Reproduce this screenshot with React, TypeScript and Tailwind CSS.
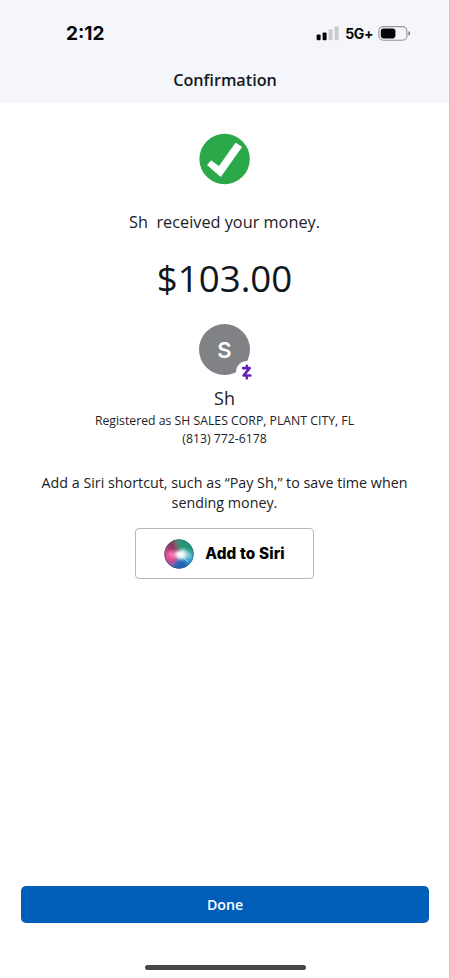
import React from 'react';

const details = [
  "Registered as SH SALES CORP, PLANT CITY, FL",
  "(813) 772-6178",
];

const SignalIcon = () => (
  <svg width="23" height="15" viewBox="0 0 23 15">
    <rect x="0.6" y="8.4" width="4" height="5.8" rx="1.2" fill="#050505" />
    <rect x="6.6" y="6.4" width="4" height="7.8" rx="1.2" fill="#050505" />
    <rect x="12.6" y="3.2" width="4" height="11" rx="1.2" fill="#c9cacc" />
    <rect x="18.6" y="0.2" width="4" height="14" rx="1.2" fill="#c9cacc" />
  </svg>
);

const BatteryIcon = () => (
  <svg width="33" height="16" viewBox="0 0 33 16">
    <rect x="0.9" y="0.6" width="28" height="13.6" rx="4.4" fill="none" stroke="#97989b" strokeWidth="1.1" />
    <rect x="2.8" y="2.4" width="14.6" height="10" rx="2.8" fill="#050505" />
    <path d="M30.3 5.2c1.3.4 1.9 1.2 1.9 2.2s-.6 1.8-1.9 2.2z" fill="#7e7f82" />
  </svg>
);

const CheckIcon = () => (
  <svg width="52" height="52" viewBox="0 0 52 52">
    <circle cx="25.6" cy="26" r="25.2" fill="#2ba84a" />
    <path d="M9 32L12.2 28.2L20.2 34L36.700 10.7L42.1 14.2L21.6 43z" fill="#fff" stroke="#fff" strokeWidth="1.4" strokeLinejoin="round" />
  </svg>
);

const ZelleIcon = () => (
  <svg width="12" height="16" viewBox="0 0 12 16" fill="none" stroke="#6322b8">
    <path d="M2.2 4.2H8.600L2.600 11.5H9.300" strokeWidth="2.7" strokeLinejoin="round" strokeLinecap="round" />
    <path d="M5.8 1.6V4M5.800 12V14.400" strokeWidth="2.4" strokeLinecap="round" />
  </svg>
);

const SiriIcon = () => (
  <svg width="30" height="30" viewBox="0 0 30 30">
    <defs>
      <clipPath id="orb"><circle cx="15" cy="15" r="14.6" /></clipPath>
      <filter id="soft" x="-40%" y="-40%" width="180%" height="180%"><feGaussianBlur stdDeviation="2" /></filter>
      <filter id="glow" x="-40%" y="-40%" width="180%" height="180%"><feGaussianBlur stdDeviation="1.4" /></filter>
    </defs>
    <g clipPath="url(#orb)">
      <rect width="30" height="30" fill="#385b88" />
      <g filter="url(#soft)">
        <path d="M15 15L10 -3H33V13z" fill="#209676" />
        <path d="M15 15L32 12V25L23 29z" fill="#3fa9d0" />
        <path d="M15 15L26 25L18 33H3L7 25z" fill="#2365b8" />
        <path d="M16 15L8 26L-3 22V8L5 5z" fill="#e0488f" />
        <path d="M15 14L2 12L4 1L11 -2z" fill="#8f3a62" />
      </g>
      <g filter="url(#glow)">
        <path d="M4 13Q11 10 16 15Q9 22 5 18z" fill="#ed78b2" />
        <path d="M15 15L18 9L25 13L27 18L18 21L13 20z" fill="#8fd6d6" />
        <ellipse cx="16.5" cy="15.5" rx="4.8" ry="3.8" fill="#fff" />
      </g>
      <path d="M16 15L24 23" stroke="#d6f5ff" strokeWidth="1" opacity=".7" />
    </g>
    <circle cx="15" cy="15" r="14.2" fill="none" stroke="#315d72" strokeWidth=".8" opacity=".6" />
  </svg>
);

const App = () => {
  return (
    <div className="flex h-[978px] w-[450px] flex-col border-r border-[#c9cacc] bg-white font-['Open_Sans','Noto_Sans',sans-serif] text-[#1c2126]">
      <header className="h-[103px] shrink-0 bg-[#f4f6fb]">
        <div className="flex h-[67px] items-center justify-between pr-[38px] pl-[66px] font-['Inter',sans-serif] text-[#050505]">
          <span className="text-[19px] leading-6 font-bold">2:12</span>
          <div className="flex items-center">
            <SignalIcon />
            <span className="mr-[5px] ml-[6px] text-[14px] leading-5 font-bold tracking-[-0.4px]">5G+</span>
            <BatteryIcon />
          </div>
        </div>
        <h1 className="pl-px text-center text-[16.2px] leading-[26px] font-semibold text-[#15191d]">Confirmation</h1>
      </header>

      <main className="flex flex-1 flex-col items-center pt-[30px]">
        <CheckIcon />
        <p className="mt-[25px] text-[16.3px] leading-6 whitespace-pre">Sh  received your money.</p>
        <p className="mt-[20px] text-[36.7px] leading-[48px] text-[#11161b]">$103.00</p>

        <div className="relative mt-[22px] flex h-[51px] w-[51px] items-center justify-center rounded-full bg-[#808285]">
          <span className="font-['Inter',sans-serif] text-[22px] leading-7 font-semibold text-white">S</span>
          <div className="absolute top-[37px] left-[37px] flex h-[22px] w-[22px] items-center justify-center rounded-full bg-white">
            <ZelleIcon />
          </div>
        </div>

        <p className="mt-[11px] text-[18px] leading-6">Sh</p>
        <div className="mt-[2px] text-center text-[12.25px] leading-[18px]">
          {details.map((line) => (
            <p key={line}>{line}</p>
          ))}
        </div>

        <p className="mt-[25px] w-[390px] text-center text-[14.3px] leading-5">
          Add a Siri shortcut, such as “Pay Sh,” to save time when sending money.
        </p>
        <button type="button" className="mt-[15px] flex h-[51px] w-[179px] items-center justify-center gap-[11px] rounded-[4px] border border-[#b5b7b9] bg-white font-['Inter',sans-serif] text-[15.3px] font-extrabold tracking-[0.15px] text-black">
          <SiriIcon />
          <span className="pt-px">Add to Siri</span>
        </button>
      </main>

      <footer className="flex flex-col items-center pr-5 pb-2 pl-[21px]">
        <button type="button" className="h-[37px] w-full rounded-[5px] bg-[#005eb8] text-[14.2px] font-semibold text-white">Done</button>
        <div className="mt-[42px] h-[5px] w-[161px] rounded-full bg-[#48484a]" />
      </footer>
    </div>
  );
};

export default App;
